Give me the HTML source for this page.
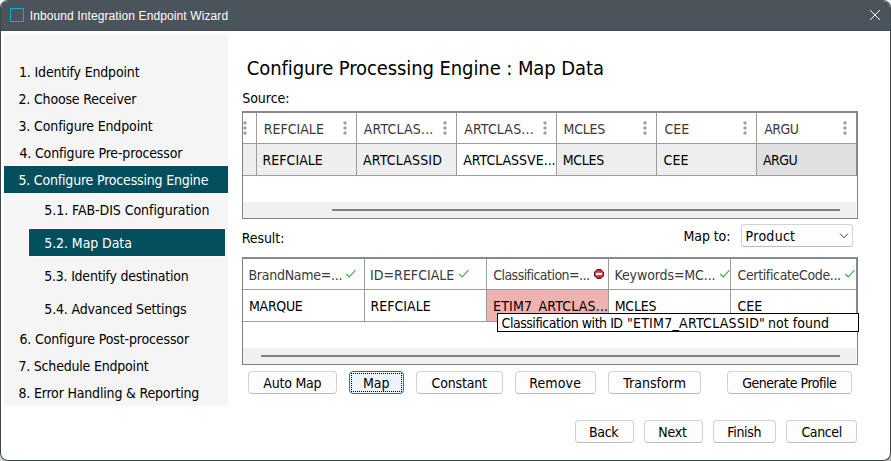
<!DOCTYPE html>
<html><head><meta charset="utf-8"><title>Inbound Integration Endpoint Wizard</title>
<style>
html,body{margin:0;padding:0;}
body{width:891px;height:461px;overflow:hidden;background:#f2f2f2;font-family:"DejaVu Sans Condensed", "DejaVu Sans", "Liberation Sans", sans-serif;position:relative;}
.win{position:absolute;left:0;top:0;width:889px;height:459px;border:1px solid #3b464e;border-top-color:#4b535b;border-radius:8px;background:#fff;overflow:hidden;}
.tb{position:absolute;left:-1px;top:-1px;width:891px;height:30px;background:#4b535b;border-bottom:1px solid #404a52;}
.abs{position:absolute;}
.tx{position:absolute;font-stretch:condensed;white-space:nowrap;line-height:normal;font-size:14px;color:#000;}
.lib{font-family:"Liberation Sans", sans-serif;}
.btn{position:absolute;box-sizing:border-box;border:1px solid #d2d2d2;border-bottom-color:#bcbcbc;border-radius:4px;background:#fdfdfd;height:23px;}
.btn.def{border-color:#1278d0;background:#edf4fa;}
.btn.def:after{content:"";position:absolute;left:1px;top:1px;right:1px;bottom:1px;border:1px dotted #000;}
.frame{position:absolute;box-sizing:border-box;border:1px solid #7e838b;border-top:2px solid #878b92;background:#fff;}
.vl{position:absolute;width:1px;background:#9c9c9c;}
.hl{position:absolute;height:1px;background:#9c9c9c;}
.dot{position:absolute;width:3px;height:3px;border-radius:50%;background:#a3a3a3;}
</style></head><body>
<div class="abs" style="left:0;top:449px;width:12px;height:12px;background:#d6d6d6;"></div>
<div class="abs" style="left:879px;top:449px;width:12px;height:12px;background:#b4b4b4;"></div>
<div class="win">
<div class="tb"></div>
<div class="abs" style="left:-1px;top:-1px;width:891px;height:461px;">
<div class="abs" style="left:10px;top:8px;width:12px;height:12px;border:1px solid #08b0ce;"></div>
<svg class="abs" style="left:869px;top:9px" width="12" height="12" viewBox="0 0 12 12"><path d="M1 1 L11 11 M11 1 L1 11" stroke="#fff" stroke-width="1" fill="none"/></svg>
<div class="abs" style="left:4px;top:34px;width:224px;height:372px;background:#f5f5f5;"></div>
<div class="abs" style="left:4px;top:166px;width:224px;height:27px;background:#044f5e;box-shadow:0 0 0 1px #fdfdfd;"></div>
<div class="abs" style="left:29px;top:229px;width:196px;height:27px;background:#044f5e;box-shadow:0 0 0 1px #fdfdfd;"></div>
<div class="frame" style="left:242px;top:111px;width:616px;height:108px;"></div>
<div class="abs" style="left:243px;top:144px;width:613px;height:31px;background:#eeeeee;"></div>
<div class="abs" style="left:457px;top:144px;width:99px;height:31px;background:#fff;"></div>
<div class="abs" style="left:757px;top:144px;width:99px;height:31px;background:#e0e0e0;"></div>
<div class="abs" style="left:243px;top:202px;width:613px;height:16px;background:#f0f0f0;"></div>
<div class="abs" style="left:332px;top:209px;width:508px;height:2px;background:#808080;"></div>
<div class="hl" style="left:243px;top:143px;width:614px;"></div>
<div class="hl" style="left:243px;top:175px;width:614px;"></div>
<div class="vl" style="left:256px;top:113px;height:62px;"></div>
<div class="vl" style="left:356px;top:113px;height:62px;"></div>
<div class="vl" style="left:456px;top:113px;height:62px;"></div>
<div class="vl" style="left:556px;top:113px;height:62px;"></div>
<div class="vl" style="left:656px;top:113px;height:62px;"></div>
<div class="vl" style="left:756px;top:113px;height:62px;"></div>
<div class="vl" style="left:856px;top:113px;height:63px;background:#878b92;"></div>
<svg class="abs" style="left:242px;top:120px" width="6" height="16" viewBox="0 0 6 16"><circle cx="3" cy="3" r="1.7" fill="#a0a0a0"/><circle cx="3" cy="8" r="1.7" fill="#a0a0a0"/><circle cx="3" cy="13" r="1.7" fill="#a0a0a0"/></svg>
<svg class="abs" style="left:342px;top:120px" width="6" height="16" viewBox="0 0 6 16"><circle cx="3" cy="3" r="1.7" fill="#a0a0a0"/><circle cx="3" cy="8" r="1.7" fill="#a0a0a0"/><circle cx="3" cy="13" r="1.7" fill="#a0a0a0"/></svg>
<svg class="abs" style="left:442px;top:120px" width="6" height="16" viewBox="0 0 6 16"><circle cx="3" cy="3" r="1.7" fill="#a0a0a0"/><circle cx="3" cy="8" r="1.7" fill="#a0a0a0"/><circle cx="3" cy="13" r="1.7" fill="#a0a0a0"/></svg>
<svg class="abs" style="left:542px;top:120px" width="6" height="16" viewBox="0 0 6 16"><circle cx="3" cy="3" r="1.7" fill="#a0a0a0"/><circle cx="3" cy="8" r="1.7" fill="#a0a0a0"/><circle cx="3" cy="13" r="1.7" fill="#a0a0a0"/></svg>
<svg class="abs" style="left:642px;top:120px" width="6" height="16" viewBox="0 0 6 16"><circle cx="3" cy="3" r="1.7" fill="#a0a0a0"/><circle cx="3" cy="8" r="1.7" fill="#a0a0a0"/><circle cx="3" cy="13" r="1.7" fill="#a0a0a0"/></svg>
<svg class="abs" style="left:742px;top:120px" width="6" height="16" viewBox="0 0 6 16"><circle cx="3" cy="3" r="1.7" fill="#a0a0a0"/><circle cx="3" cy="8" r="1.7" fill="#a0a0a0"/><circle cx="3" cy="13" r="1.7" fill="#a0a0a0"/></svg>
<svg class="abs" style="left:842px;top:120px" width="6" height="16" viewBox="0 0 6 16"><circle cx="3" cy="3" r="1.7" fill="#a0a0a0"/><circle cx="3" cy="8" r="1.7" fill="#a0a0a0"/><circle cx="3" cy="13" r="1.7" fill="#a0a0a0"/></svg>
<div class="abs" style="left:741px;top:224px;width:112px;height:23px;box-sizing:border-box;border:1px solid #d2d2d2;border-bottom-color:#bcbcbc;border-radius:3px;background:#fdfdfd;"></div>
<svg class="abs" style="left:838px;top:231px" width="12" height="9" viewBox="0 0 12 9"><path d="M2 2.5 L6 6.8 L10 2.5" stroke="#444" stroke-width="1" fill="none"/></svg>
<div class="frame" style="left:242px;top:257px;width:616px;height:108px;"></div>
<div class="abs" style="left:487px;top:290px;width:121px;height:31px;background:#f0b1b1;"></div>
<div class="abs" style="left:243px;top:348px;width:613px;height:16px;background:#f0f0f0;"></div>
<div class="abs" style="left:261px;top:355px;width:579px;height:2px;background:#808080;"></div>
<div class="hl" style="left:243px;top:289px;width:614px;"></div>
<div class="hl" style="left:243px;top:321px;width:614px;"></div>
<div class="vl" style="left:364px;top:259px;height:62px;"></div>
<div class="vl" style="left:486px;top:259px;height:62px;"></div>
<div class="vl" style="left:608px;top:259px;height:62px;"></div>
<div class="vl" style="left:730px;top:259px;height:62px;"></div>
<div class="vl" style="left:856px;top:259px;height:63px;background:#878b92;"></div>
<svg class="abs" style="left:345px;top:269.3px" width="12" height="10" viewBox="0 0 12 10"><path d="M1.2 5 L4.2 8 L10.5 1.2" stroke="#45ab4a" stroke-width="1.15" fill="none"/></svg>
<svg class="abs" style="left:457.6px;top:269.3px" width="12" height="10" viewBox="0 0 12 10"><path d="M1.2 5 L4.2 8 L10.5 1.2" stroke="#45ab4a" stroke-width="1.15" fill="none"/></svg>
<svg class="abs" style="left:719.2px;top:269.3px" width="12" height="10" viewBox="0 0 12 10"><path d="M1.2 5 L4.2 8 L10.5 1.2" stroke="#45ab4a" stroke-width="1.15" fill="none"/></svg>
<svg class="abs" style="left:843.9px;top:269.3px" width="12" height="10" viewBox="0 0 12 10"><path d="M1.2 5 L4.2 8 L10.5 1.2" stroke="#45ab4a" stroke-width="1.15" fill="none"/></svg>
<svg class="abs" style="left:594px;top:269px" width="10" height="10" viewBox="0 0 10 10"><polygon points="3.1,0.5 6.9,0.5 9.5,3.1 9.5,6.9 6.9,9.5 3.1,9.5 0.5,6.9 0.5,3.1" fill="#dc2a30" stroke="#3a0c0e" stroke-width="0.9"/><rect x="1.9" y="3.8" width="6.2" height="2.3" fill="#fff"/></svg>
<div class="abs" style="left:497px;top:313px;width:362px;height:19px;box-sizing:border-box;border:1px solid #000;background:#fff;"></div>
<div class="btn" style="left:248px;top:371px;width:89px;"></div>
<div class="btn def" style="left:349px;top:371px;width:55px;"></div>
<div class="btn" style="left:416px;top:371px;width:87px;"></div>
<div class="btn" style="left:515px;top:371px;width:81px;"></div>
<div class="btn" style="left:608px;top:371px;width:93px;"></div>
<div class="btn" style="left:727px;top:371px;width:125px;"></div>
<div class="btn" style="left:575px;top:420px;width:59px;"></div>
<div class="btn" style="left:644px;top:420px;width:59px;"></div>
<div class="btn" style="left:713px;top:420px;width:63px;"></div>
<div class="btn" style="left:786px;top:420px;width:71px;"></div>
<div class="tx lib" style="left:29.70px;top:9.00px;font-size:12px;color:#fff;letter-spacing:0.106px;">Inbound Integration Endpoint Wizard</div>
<div class="tx" style="left:19.00px;top:64.00px;letter-spacing:-0.158px;">1. Identify Endpoint</div>
<div class="tx" style="left:18.50px;top:91.00px;letter-spacing:-0.176px;">2. Choose Receiver</div>
<div class="tx" style="left:18.50px;top:118.00px;letter-spacing:-0.140px;">3. Configure Endpoint</div>
<div class="tx" style="left:19.40px;top:145.00px;letter-spacing:-0.152px;">4. Configure Pre-processor</div>
<div class="tx" style="left:18.40px;top:172.00px;color:#fff;letter-spacing:-0.186px;">5. Configure Processing Engine</div>
<div class="tx" style="left:44.30px;top:202.00px;letter-spacing:-0.060px;">5.1. FAB-DIS Configuration</div>
<div class="tx" style="left:44.30px;top:235.00px;color:#fff;letter-spacing:-0.092px;">5.2. Map Data</div>
<div class="tx" style="left:44.30px;top:268.00px;letter-spacing:-0.237px;">5.3. Identify destination</div>
<div class="tx" style="left:44.30px;top:301.00px;letter-spacing:-0.171px;">5.4. Advanced Settings</div>
<div class="tx" style="left:19.40px;top:331.00px;letter-spacing:-0.131px;">6. Configure Post-processor</div>
<div class="tx" style="left:18.40px;top:358.00px;letter-spacing:-0.195px;">7. Schedule Endpoint</div>
<div class="tx" style="left:18.40px;top:385.00px;letter-spacing:-0.175px;">8. Error Handling &amp; Reporting</div>
<div class="tx" style="left:246.80px;top:56.00px;font-size:20px;letter-spacing:-0.089px;">Configure Processing Engine : Map Data</div>
<div class="tx" style="left:242.20px;top:90.00px;letter-spacing:-0.017px;">Source:</div>
<div class="tx" style="left:241.70px;top:230.00px;letter-spacing:-0.067px;">Result:</div>
<div class="tx" style="left:683.50px;top:228.00px;letter-spacing:-0.083px;">Map to:</div>
<div class="tx" style="left:745.60px;top:228.00px;letter-spacing:0.283px;">Product</div>
<div class="tx" style="left:263.70px;top:121.00px;color:#3a3a3a;letter-spacing:0.014px;">REFCIALE</div>
<div class="tx" style="left:363.80px;top:121.00px;color:#3a3a3a;letter-spacing:0.178px;">ARTCLAS...</div>
<div class="tx" style="left:464.20px;top:121.00px;color:#3a3a3a;letter-spacing:0.167px;">ARTCLAS...</div>
<div class="tx" style="left:563.60px;top:121.00px;color:#3a3a3a;letter-spacing:-0.225px;">MCLES</div>
<div class="tx" style="left:664.50px;top:121.00px;color:#3a3a3a;letter-spacing:-0.050px;">CEE</div>
<div class="tx" style="left:764.20px;top:121.00px;color:#3a3a3a;letter-spacing:-0.533px;">ARGU</div>
<div class="tx" style="left:262.60px;top:152.00px;letter-spacing:0.014px;">REFCIALE</div>
<div class="tx" style="left:363.00px;top:152.00px;letter-spacing:0.167px;">ARTCLASSID</div>
<div class="tx" style="left:463.20px;top:152.00px;letter-spacing:-0.008px;">ARTCLASSVE...</div>
<div class="tx" style="left:562.80px;top:152.00px;letter-spacing:-0.325px;">MCLES</div>
<div class="tx" style="left:663.50px;top:152.00px;letter-spacing:0.100px;">CEE</div>
<div class="tx" style="left:763.00px;top:152.00px;letter-spacing:-0.533px;">ARGU</div>
<div class="tx" style="left:248.50px;top:267.00px;color:#3a3a3a;letter-spacing:-0.275px;">BrandName=...</div>
<div class="tx" style="left:370.10px;top:267.00px;color:#3a3a3a;letter-spacing:0.020px;">ID=REFCIALE</div>
<div class="tx" style="left:493.20px;top:267.00px;color:#3a3a3a;letter-spacing:-0.535px;">Classification=...</div>
<div class="tx" style="left:614.50px;top:267.00px;color:#3a3a3a;letter-spacing:-0.108px;">Keywords=MC...</div>
<div class="tx" style="left:737.50px;top:267.00px;color:#3a3a3a;letter-spacing:-0.359px;">CertificateCode...</div>
<div class="tx" style="left:249.00px;top:298.00px;letter-spacing:-0.300px;">MARQUE</div>
<div class="tx" style="left:370.60px;top:298.00px;">REFCIALE</div>
<div class="tx" style="left:493.00px;top:298.00px;letter-spacing:0.173px;">ETIM7_ARTCLAS...</div>
<div class="tx" style="left:614.70px;top:298.00px;letter-spacing:-0.225px;">MCLES</div>
<div class="tx" style="left:737.50px;top:298.00px;">CEE</div>
<div class="tx" style="left:501.60px;top:314.50px;letter-spacing:-0.476px;">Classification with ID</div>
<div class="tx" style="left:626.90px;top:314.50px;letter-spacing:0.265px;">&quot;ETIM7_ARTCLASSID&quot;</div>
<div class="tx" style="left:767.90px;top:314.50px;letter-spacing:0.038px;">not found</div>
<div class="tx" style="left:263.30px;top:375.00px;letter-spacing:-0.229px;">Auto Map</div>
<div class="tx" style="left:363.05px;top:375.00px;letter-spacing:-0.050px;">Map</div>
<div class="tx" style="left:431.60px;top:375.00px;letter-spacing:-0.171px;">Constant</div>
<div class="tx" style="left:529.15px;top:375.00px;letter-spacing:0.140px;">Remove</div>
<div class="tx" style="left:623.35px;top:375.00px;letter-spacing:0.037px;">Transform</div>
<div class="tx" style="left:742.15px;top:375.00px;letter-spacing:-0.487px;">Generate Profile</div>
<div class="tx" style="left:589.05px;top:424.00px;letter-spacing:-0.367px;">Back</div>
<div class="tx" style="left:658.35px;top:424.00px;letter-spacing:-0.233px;">Next</div>
<div class="tx" style="left:727.35px;top:424.00px;letter-spacing:-0.340px;">Finish</div>
<div class="tx" style="left:801.45px;top:424.00px;letter-spacing:-0.380px;">Cancel</div>
</div></div>
</body></html>
